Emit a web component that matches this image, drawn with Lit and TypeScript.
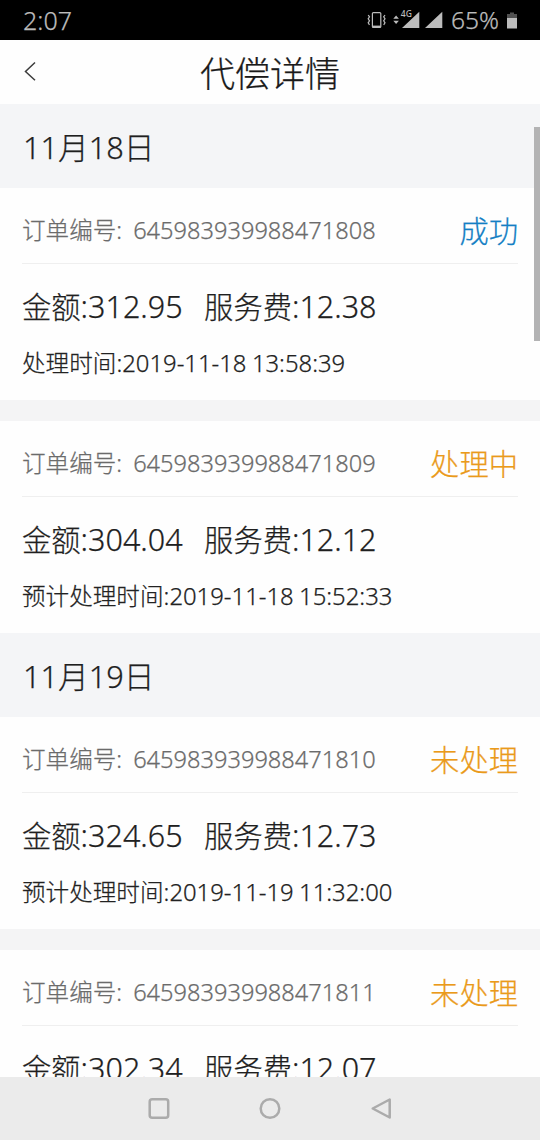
import { LitElement, html, css } from "lit";
import { customElement, property } from "lit/decorators.js";

interface Order {
  id: string;
  status: string;
  done?: boolean;
  amount: string;
  fee: string;
  timeLabel: string;
  time: string;
}

interface Group {
  date: string;
  orders: Order[];
}

const groups: Group[] = [
  {
    date: "11月18日",
    orders: [
      { id: "645983939988471808", status: "成功", done: true, amount: "312.95", fee: "12.38", timeLabel: "处理时间", time: "2019-11-18 13:58:39" },
      { id: "645983939988471809", status: "处理中", amount: "304.04", fee: "12.12", timeLabel: "预计处理时间", time: "2019-11-18 15:52:33" },
    ],
  },
  {
    date: "11月19日",
    orders: [
      { id: "645983939988471810", status: "未处理", amount: "324.65", fee: "12.73", timeLabel: "预计处理时间", time: "2019-11-19 11:32:00" },
      { id: "645983939988471811", status: "未处理", amount: "302.34", fee: "12.07", timeLabel: "", time: "" },
    ],
  },
];

@customElement("order-card")
export class OrderCard extends LitElement {
  @property({ attribute: false }) order!: Order;

  static styles = css`
    :host { display: block; height: 212px; padding: 0 22px; box-sizing: border-box; background: #fefefe; }
    .head { display: flex; justify-content: space-between; height: 75px; border-bottom: 1px solid #efefef; white-space: pre; }
    .number { display: flex; gap: 11px; font-size: 23.6px; line-height: 84px; color: #6b6b6b; }
    .status { font-size: 29.3px; line-height: 86px; color: #ea9a1a; }
    .done { color: #147fc4; }
    .money { display: flex; gap: 21.5px; height: 39px; font-size: 29.3px; line-height: 40px; padding-top: 23px; color: #1f1f1f; white-space: pre; }
    .money b { font-weight: inherit; font-size: 30.5px; line-height: 1; }
    .time { font-size: 23.6px; line-height: 32px; padding-top: 21px; color: #222; white-space: pre; }
    .time b { font-weight: inherit; font-size: 23.85px; line-height: 1; word-spacing: -0.8px; }
  `;

  render() {
    const o = this.order;
    return html`
      <div class="head">
        <div class="number"><span>订单编号:</span><span>${o.id}</span></div>
        <div class="status ${o.done ? "done" : ""}">${o.status}</div>
      </div>
      <div class="money"><span>金额<b>:${o.amount}</b></span><span>服务费<b>:${o.fee}</b></span></div>
      ${o.time ? html`<div class="time">${o.timeLabel}<b>:${o.time}</b></div>` : ""}
    `;
  }
}

@customElement("app-root")
export class AppRoot extends LitElement {
  static styles = css`
    :host {
      display: flex; flex-direction: column; position: relative;
      width: 540px; height: 1140px; overflow: hidden; background: #fefefe;
      font-family: "Noto Sans", "Noto Sans CJK SC", sans-serif; font-weight: 300;
      -webkit-text-stroke-width: 0.25px;
    }
    .statusbar { display: flex; justify-content: space-between; flex: none; height: 40px; padding: 0 23px; background: #000; color: #bcbcbc; font-size: 25px; line-height: 40px; }
    .tray { display: flex; width: 152px; margin-right: -1px; }
    .signals { flex: none; width: 85px; height: 40px; }
    .percent { flex: none; width: 54px; font-size: 24.6px; }
    .battery { flex: none; width: 13px; height: 40px; }
    .header { display: grid; grid-template-columns: 60px 1fr 60px; flex: none; height: 64px; }
    .back { width: 60px; height: 64px; }
    .title { font-size: 35px; line-height: 67px; text-align: center; color: #1a1a1a; }
    .list { flex: 1; min-height: 0; overflow: hidden; }
    .date { height: 84px; padding-left: 23px; background: #f4f5f7; font-size: 30.7px; line-height: 86px; color: #1f1f1f; }
    .orders { display: flex; flex-direction: column; gap: 21px; background: #f4f4f5; }
    .nav { display: flex; justify-content: center; flex: none; height: 63px; background: #ebebeb; }
    .thumb { position: absolute; right: 0; top: 127px; width: 6px; height: 214px; background: #b3b3b4; }
  `;

  render() {
    return html`
      <div class="statusbar">
        <span>2:07</span>
        <div class="tray">
          <svg class="signals" viewBox="365 0 85 40">
            <g fill="none" stroke="#bcbcbc" stroke-width="1.2">
              <rect x="371.4" y="12.6" width="8.400" height="14.8" rx="1" />
              <path d="M371.5 26.6h8" stroke-width="2" />
              <path d="M367.2 15l1.3 1.8-1.3 2 1.3 2-1.3 2 1.3 2M384 15l-1.3 1.8 1.3 2-1.3 2 1.3 2-1.3 2" />
            </g>
            <g fill="#bcbcbc">
              <path d="M392.300 18.800l2.800-3.300 2.800 3.300zM392.300 20.800l2.800 3.300 2.800-3.300zM401 28l17.300-16.300v16.300zM424 28l17.300-16.300v16.300z" />
              <text x="399.800" y="17.300" font-size="8.500" font-weight="500" stroke="#000" stroke-width="1.500" paint-order="stroke">4G</text>
            </g>
          </svg>
          <span class="percent">65%</span>
          <svg class="battery" viewBox="504 0 13 40">
            <path d="M506 18v-4h3v-1.500h4V14h3v4z" fill="#505050" />
            <path d="M506 18h10v10.500h-10z" fill="#bcbcbc" />
          </svg>
        </div>
      </div>
      <div class="header">
        <svg class="back" viewBox="0 40 60 64"><path d="M35 62.500l-9.500 9 9.500 8.800" fill="none" stroke="#3c3c3c" stroke-width="1.500" /></svg>
        <div class="title">代偿详情</div>
      </div>
      <div class="list">
        ${groups.map((g) => html`
          <div class="date">${g.date}</div>
          <div class="orders">${g.orders.map((o) => html`<order-card .order=${o}></order-card>`)}</div>
        `)}
      </div>
      <div class="nav">
        <svg width="540" height="63" viewBox="0 1077 540 63" fill="none" stroke="#ababab" stroke-width="2.500" stroke-linejoin="round">
          <rect x="149.700" y="1099.200" width="18.500" height="18.500" rx="2.500" />
          <circle cx="270" cy="1108.500" r="9.300" />
          <path d="M389.700 1099.500v18l-17-9z" />
        </svg>
      </div>
      <div class="thumb"></div>
    `;
  }
}
